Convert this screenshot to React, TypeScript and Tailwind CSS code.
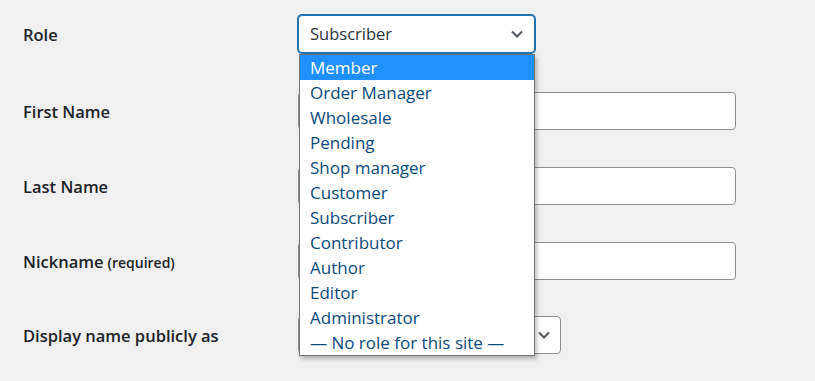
import React from "react";

const roles = [
  "Member",
  "Order Manager",
  "Wholesale",
  "Pending",
  "Shop manager",
  "Customer",
  "Subscriber",
  "Contributor",
  "Author",
  "Editor",
  "Administrator",
  "— No role for this site —",
];

function Chevron() {
  return (
    <svg width="14" height="14" viewBox="0 0 14 14" className="shrink-0">
      <path d="M2 4.5 L7 9.5 L12 4.5" fill="none" stroke="#50575e" strokeWidth="2" />
    </svg>
  );
}

function Row({ label, extra, children, className }: { label: string; extra?: string; children: React.ReactNode; className?: string }) {
  return (
    <div className={`flex items-center ${className ?? ""}`}>
      <div className="mt-[3px] w-[275px] shrink-0 text-[16.5px] font-semibold text-[#1d2327]">
        {label}
        {extra && <span className="ml-1 text-[14px] font-semibold">{extra}</span>}
      </div>
      {children}
    </div>
  );
}

export default function App() {
  return (
    <div className="relative h-[381px] w-[815px] overflow-hidden bg-[#f0f0f1] pl-[23px] pt-[15px]" style={{ fontFamily: '"Open Sans", "Noto Sans", sans-serif' }}>
      <Row label="Role">
        <div className="flex h-[38px] w-[237px] items-center justify-between rounded-[4px] border border-[#2271b1] bg-white pl-[11px] pr-[10px] text-[16.5px] text-[#2c3338] shadow-[0_0_0_1px_#2271b1]">
          <span>Subscriber</span>
          <Chevron />
        </div>
      </Row>

      <Row label="First Name" className="mt-[39px]">
        <div className="h-[38px] w-[438px] rounded-[4px] border border-[#8c8f94] bg-white" />
      </Row>
      <Row label="Last Name" className="mt-[37px]">
        <div className="h-[38px] w-[438px] rounded-[4px] border border-[#8c8f94] bg-white" />
      </Row>
      <Row label="Nickname" extra="(required)" className="mt-[37px]">
        <div className="h-[38px] w-[438px] rounded-[4px] border border-[#8c8f94] bg-white" />
      </Row>
      <Row label="Display name publicly as" className="mt-[36px]">
        <div className="flex h-[38px] w-[263px] items-center justify-end rounded-[4px] border border-[#8c8f94] bg-white pr-[9px]">
          <Chevron />
        </div>
      </Row>

      <ul className="absolute left-[299px] top-[54px] w-[236px] border border-[#767676] bg-white shadow-[2px_3px_4px_rgba(0,0,0,0.25)]">
        {roles.map((r, i) => (
          <li
            key={r}
            className={`h-[25px] pl-[10px] text-[17px] leading-[25px] ${i === 0 ? "bg-[#1e90ff] text-white" : "text-[#0b4a7d]"}`}
          >
            {r}
          </li>
        ))}
      </ul>
    </div>
  );
}
